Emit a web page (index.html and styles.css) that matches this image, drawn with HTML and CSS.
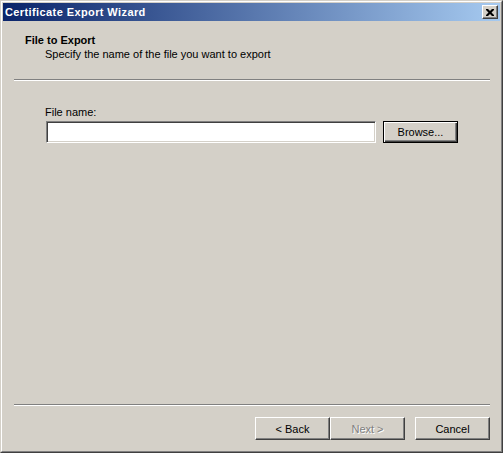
FILE: index.html
```html
<!DOCTYPE html>
<html lang="en">
<head>
<meta charset="UTF-8">
<meta name="viewport" content="width=device-width, initial-scale=1.0">
<title>Certificate Export Wizard</title>
<link rel="stylesheet" href="styles.css">
</head>
<body>
<div class="window">
    <div class="window-inner">
        <div class="titlebar">
            <span class="title">Certificate Export Wizard</span>
            <button type="button" class="close-btn" aria-label="Close">
                <svg width="8" height="7" viewBox="0 0 8 7">
                    <path d="M0 0h2l2 2 2-2h2v1l-2.5 2.5 2.5 2.5v1h-2l-2-2-2 2h-2v-1l2.5-2.5-2.5-2.5z" fill="#000"/>
                </svg>
            </button>
        </div>
        <div class="content">
            <div class="header">
                <div class="header-title">File to Export</div>
                <div class="header-desc">Specify the name of the file you want to export</div>
            </div>
            <div class="separator separator-top"></div>
            <div class="body">
                <label class="field-label" for="fileName">File name:</label>
                <div class="field-row">
                    <input type="text" id="fileName" class="text-input">
                    <button type="button" class="btn btn-default">Browse...</button>
                </div>
            </div>
            <div class="separator"></div>
            <div class="footer">
                <button type="button" class="btn">&lt; Back</button>
                <button type="button" class="btn" disabled>Next &gt;</button>
                <button type="button" class="btn btn-cancel">Cancel</button>
            </div>
        </div>
    </div>
</div>
</body>
</html>
```
FILE: styles.css
```css
html, body {
    margin: 0;
    height: 100%;
}

body {
    font-family: "Liberation Sans", Arial, sans-serif;
    font-size: 11px;
    color: #000;
    background-color: #d4d0c8;
}

.window {
    box-sizing: border-box;
    height: 453px;
    border: 1px solid;
    border-color: #d4d0c8 #404040 #404040 #d4d0c8;
    background-color: #d4d0c8;
}

.window-inner {
    box-sizing: border-box;
    height: 100%;
    border: 1px solid;
    border-color: #fff #808080 #808080 #fff;
    padding: 1px;
    display: flex;
    flex-direction: column;
}

.titlebar {
    height: 18px;
    display: flex;
    align-items: center;
    justify-content: space-between;
    padding: 0 2px;
    background: linear-gradient(to right, #0a246a, #a6caf0);
}

.title {
    color: #fff;
    font-weight: bold;
    line-height: 18px;
    letter-spacing: 0.4px;
}

.close-btn {
    box-sizing: border-box;
    width: 16px;
    height: 14px;
    padding: 0;
    display: flex;
    align-items: center;
    justify-content: center;
    background-color: #d4d0c8;
    border: 1px solid;
    border-color: #fff #404040 #404040 #fff;
    box-shadow: inset -1px -1px #808080;
}

.content {
    flex: 1;
    display: flex;
    flex-direction: column;
}

.header {
    padding: 13px 0 0 22px;
    line-height: 13px;
}

.header-title {
    font-weight: bold;
}

.header-desc {
    margin: 1px 0 0 20px;
}

.separator {
    height: 0;
    margin: 0 10px 0 11px;
    border-top: 1px solid #808080;
    border-bottom: 1px solid #fff;
}

.separator-top {
    margin-top: 18px;
}

.body {
    flex: 1;
    padding: 25px 0 0 42px;
}

.field-label {
    display: block;
    line-height: 13px;
    margin-bottom: 2px;
}

.field-row {
    display: flex;
    gap: 7px;
    margin-left: 1px;
}

.text-input {
    box-sizing: border-box;
    width: 330px;
    height: 22px;
    margin: 0;
    border: 1px solid;
    border-color: #808080 #fff #fff #808080;
    box-shadow: inset 1px 1px #404040, inset -1px -1px #d4d0c8;
    background-color: #fff;
    outline: none;
    font: inherit;
}

.btn {
    box-sizing: border-box;
    width: 75px;
    height: 23px;
    margin: 0;
    padding: 0;
    font: inherit;
    color: #000;
    background-color: #d4d0c8;
    border: 1px solid;
    border-color: #fff #404040 #404040 #fff;
    box-shadow: inset -1px -1px #808080;
}

.btn-default {
    height: 22px;
    border-color: #000;
    box-shadow: inset 1px 1px #fff, inset -1px -1px #404040, inset -2px -2px #808080;
}

.btn:disabled {
    color: #808080;
    text-shadow: 1px 1px #fff;
}

.footer {
    display: flex;
    justify-content: flex-end;
    padding: 11px 10px 10px 0;
}

.btn-cancel {
    margin-left: 10px;
}
```
